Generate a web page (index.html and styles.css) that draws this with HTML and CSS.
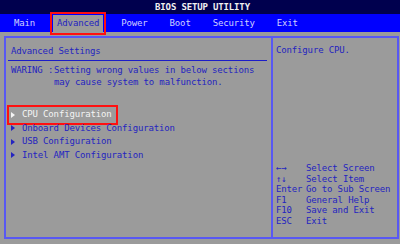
FILE: index.html
```html
<!DOCTYPE html>
<html>

<head>
    <title>BIOS Setup Utility</title>
    <link rel="stylesheet" href="styles.css">
</head>

<body>
    <div class="title-bar">BIOS SETUP UTILITY</div>
    <nav class="menu">
        <span class="tab">Main</span>
        <span class="tab active">Advanced</span>
        <span class="tab">Power</span>
        <span class="tab">Boot</span>
        <span class="tab">Security</span>
        <span class="tab">Exit</span>
    </nav>

    <div class="frame">
        <div class="main-panel">
            <h1 class="panel-heading">Advanced Settings</h1>
            <div class="warning">
                <span>WARING :</span>
                <span>Setting wrong values in below sections<br>may cause system to malfunction.</span>
            </div>
            <ul class="items">
                <li class="item selected"><span class="arrow"></span>CPU Configuration</li>
                <li class="item"><span class="arrow"></span>Onboard Devices Configuration</li>
                <li class="item"><span class="arrow"></span>USB Configuration</li>
                <li class="item"><span class="arrow"></span>Intel AMT Configuration</li>
            </ul>
        </div>

        <div class="help-panel">
            <p class="help-text">Configure CPU.</p>
            <div class="keys">
                <span>&larr;&rarr;</span><span>Select Screen</span>
                <span>&uarr;&darr;</span><span>Select Item</span>
                <span>Enter</span><span>Go to Sub Screen</span>
                <span>F1</span><span>General Help</span>
                <span>F10</span><span>Save and Exit</span>
                <span>ESC</span><span>Exit</span>
            </div>
        </div>
    </div>
</body>

</html>
```

FILE: styles.css
```css
* {
    margin: 0px;
    padding: 0px;
    box-sizing: border-box;
}

body {
    background-color: #9b9b9b;
    font-family: "DejaVu Sans Mono", "Liberation Mono", monospace;
    font-size: 9px;
    letter-spacing: -0.15px;
    color: #2424c0;
    width: 400px;
    height: 244px;
    overflow: hidden;
}

.title-bar {
    height: 14px;
    line-height: 14px;
    background-color: #00004e;
    color: #f0f0f0;
    font-weight: bold;
    text-align: center;
    padding-left: 5px;
}

.menu {
    display: flex;
    height: 18px;
    background-color: #0000ff;
    padding-left: 10px;
    gap: 14px;
}

.tab {
    color: #d0d0ff;
    line-height: 18px;
    padding: 0 4px;
}

.tab.active {
    background-color: #9b9b9b;
    color: #2424c0;
    margin-top: 1px;
    line-height: 17px;
    outline: 2px solid #ff1010;
    outline-offset: 1px;
}

.frame {
    display: flex;
    margin: 4px 0 0 4px;
    width: 395px;
    height: 203px;
    border: 2px solid #5858f4;
}

.main-panel {
    width: 267px;
    border-right: 2px solid #5858f4;
    padding-top: 7px;
}

.panel-heading {
    font-size: 9px;
    font-weight: normal;
    line-height: 12px;
    margin: 0 4px 0 2px;
    padding: 0 0 3px 3px;
    border-bottom: 1px solid #1c1cc8;
}

.warning {
    display: grid;
    grid-template-columns: 43px auto;
    line-height: 12px;
    margin-top: 3px;
    padding-left: 5px;
}

.items {
    list-style: none;
    display: flex;
    flex-direction: column;
    align-items: flex-start;
    margin: 20px 0 0 4px;
}

.item {
    display: flex;
    align-items: center;
    line-height: 13.5px;
    padding: 0 3px 0 1px;
}

.arrow {
    width: 0;
    height: 0;
    border-top: 3px solid transparent;
    border-bottom: 3px solid transparent;
    border-left: 4px solid #2424c0;
    margin-right: 7px;
}

.item.selected {
    color: #f4f4f4;
    outline: 2px solid #ff1010;
    outline-offset: 1px;
}

.item.selected .arrow {
    border-left-color: #f4f4f4;
}

.help-panel {
    flex: 1;
    display: flex;
    flex-direction: column;
    justify-content: space-between;
    padding: 6px 0 11px 3px;
}

.help-text {
    line-height: 12px;
}

.keys {
    display: grid;
    grid-template-columns: 30px auto;
    line-height: 10.5px;
}
```
